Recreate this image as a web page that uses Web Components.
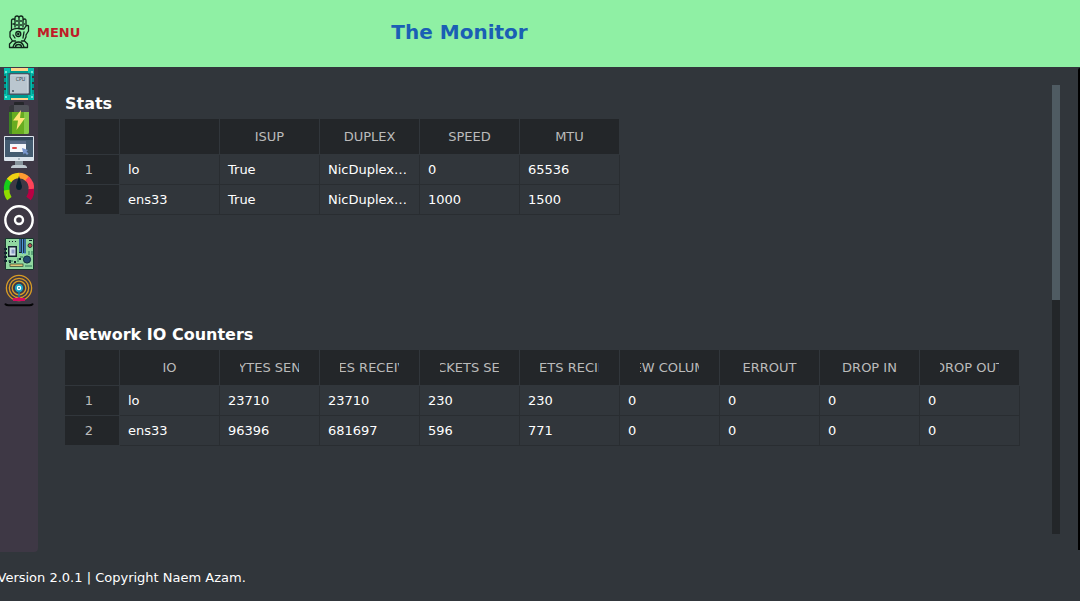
<!DOCTYPE html>
<html lang="en"><head><meta charset="utf-8"><title>The Monitor</title>
<style>body{margin:0;background:#31363b;font:13px "DejaVu Sans",sans-serif;color:#fff}</style></head><body>
<monitor-app></monitor-app>
<script>
const ICONS={
hand:`<svg width="22" height="34" viewBox="0 0 22 34" fill="none" stroke="#10241a" stroke-width="1.3" stroke-linejoin="round" stroke-linecap="round"><path d="M3.5 15V6q0-2 1.8-2t1.7 2V3q0-2 2-2t2 2q0-2 2-2t2 2v3q0-2 1.6-2T18 6v5M7 5v7M11 3v10M15 5v7M3.5 15q3.5-2 7-1.5T16 14l2-3q2-1 2.5 0v5L18 20M5 9h1M8.5 6h1M12.5 6h1M16.500 9v.1M8.500 10h1M12.500 10h1M3.5 15L2 17v5l2.500 4M18 20v2l-2 4M4.500 26l-3 3v3.500h18V29l-3-3M4.500 26h3M13.500 26h3M5 32q1.500-5 5.500-5t5.500 5M5 20l2 3M16 17l-1 6M7.500 32q0-2.500 3-2.500t3 2.500"/><circle cx="10.300" cy="19" r="2.500"/><circle cx="10.300" cy="19" r=".6" fill="#10241a"/></svg>`,
cpu:`<svg width="38" height="34" viewBox="0 0 38 34"><path fill="#00988e" d="M4 1h30v32H4z"/><path fill="#31363b" d="M4 9h2v2H4zM4 15h2v2H4zM4 21h2v2H4zM32 9h2v2h-2zM32 15h2v2h-2zM32 21h2v2h-2z"/><path fill="#05bfae" d="M4 1h6v5H7v22h3v5H4v-6h2V7H4zM28 1h6v6h-2v20h2v6h-6v-5h3V6h-3z"/><path fill="#ffd78a" d="M11 1h17v3H11zM11 31h17v2H11z"/><rect x="8.500" y="6" width="21.500" height="22" rx="1" fill="#445765"/><rect x="10" y="7.500" width="18.500" height="19" fill="#bac6cf"/><path d="M11 8h17v18" fill="none" stroke="#d3dbe3"/><text x="15.800" y="13.800" font-family="DejaVu Sans" font-size="5.500" textLength="9.500" lengthAdjust="spacingAndGlyphs" fill="#34424d">CPU</text><circle cx="13" cy="24" r=".9" fill="#34424d"/><g fill="#a6f6e8"><circle cx="6" cy="5" r=".9"/><circle cx="32" cy="5" r=".9"/><circle cx="6" cy="30" r=".9"/><circle cx="32" cy="30" r=".9"/></g></svg>`,
battery:`<svg width="38" height="34" viewBox="0 0 38 34"><rect x="14" y="1" width="10" height="5" rx="1" fill="#25262a"/><rect x="9" y="4" width="20" height="29" rx="2" fill="#505258"/><path fill="#35363b" d="M9 9V6q0-2 2-2h3v7H9z"/><path fill="#68ac20" d="M9 11h20v20q0 2-2 2H11q-2 0-2-2z"/><path fill="#3c8323" d="M9 11h3v22h-1q-2 0-2-2z"/><path fill="#86ca47" d="M24 11h5v20q0 2-2 2h-3z"/><path fill="#ffe477" d="M21 9l-8 10.500h5L16.500 29 25 17h-5z"/></svg>`,
monitor:`<svg width="38" height="34" viewBox="0 0 38 34"><rect x="4" y="1" width="30" height="25" rx="1" fill="#dce4ec"/><path fill="#445b70" d="M5 2h28v20H5z"/><path fill="#324559" d="M5 2h28v3H5z"/><path fill="#5a6c88" d="M10 6h16v3H10z"/><path fill="#f4f6fa" d="M10 9h16v8H10z"/><rect x="12" y="12" width="5" height="2" rx="1" fill="#dd4c4a"/><path fill="#7895cc" d="M22 13l6 2-1.500 1.500 2 2-1.500 1.500-2-2-1.500 1.500z"/><circle cx="19" cy="24" r=".8" fill="#708291"/><path fill="#87949c" d="M15 26h8v4h-8z"/><path fill="#bfc9d0" d="M11 32q1-2 3-2h10q2 0 3 2v1H11z"/></svg>`,
gauge:`<svg width="38" height="34" viewBox="0 0 38 34" fill="none" stroke-width="5.500"><path stroke="#91dc00" d="M9.400 29.600A12.500 12.500 0 0 1 6.800 20"/><path stroke="#16cc19" d="M6.800 21A12.500 12.500 0 0 1 10 10.500"/><path stroke="#efd213" d="M9 11.500A12.500 12.500 0 0 1 19 6.500"/><path stroke="#ff9b31" d="M19 6.500a12.500 12.500 0 0 1 9 4"/><path stroke="#ff4358" d="M27 9.500a12.500 12.500 0 0 1 4.200 11"/><path stroke="#b90043" d="M31.200 20a12.500 12.500 0 0 1-2.700 9.600"/><path d="M19 7l3 10q0 4-3 4t-3-4z" fill="#061e2d" stroke="none"/></svg>`,
disc:`<svg width="38" height="34" viewBox="0 0 38 34" fill="none" stroke="#fff"><circle cx="19" cy="17" r="13.700" stroke-width="2.400"/><circle cx="19" cy="17" r="4" stroke-width="2.400"/></svg>`,
board:`<svg width="38" height="34" viewBox="0 0 38 34"><path fill="#91d8a0" stroke="#18372d" d="M5.500 1.500h28v31h-28z"/><g fill="#11242d"><path d="M4 11h3v2H4zM4 15h3v2H4zM4 19h3v2H4zM4 23h3v2H4zM19 2h7v14h-7zM8 9h9v11H8z"/><path d="M9 4h1v1H9zM12 4h1v1h-1zM15 4h1v1h-1zM9 23h2v3H9zM19 21h2v2h-2zM14 24h2v2h-2zM29 3h3v1h-3z"/></g><path d="M20 2v13M22.500 2v15M25 2v15" stroke="#5096db" stroke-width="1.300"/><rect x="9.500" y="10.500" width="6" height="8" fill="#d4e2ec"/><rect x="11.500" y="12.500" width="3" height="4" fill="#8c9cc7"/><circle cx="30" cy="8.500" r="2" fill="#c44b4e" stroke="#253c35"/><path d="M29 14v4M32 14v4M8 24h5M18 21v4M20 20h3M25 29h7" stroke="#287354"/><circle cx="27" cy="22.500" r="3.600" fill="#254d73" stroke="#102e3e"/><rect x="10" y="27" width="13" height="2.500" fill="#dfc578" stroke="#29412c" stroke-width=".7"/></svg>`,
signal:`<svg width="38" height="38" viewBox="0 0 38 38" fill="none"><g stroke="#d89b25" stroke-width="1.300"><circle cx="19" cy="17" r="12.600"/><circle cx="19" cy="17" r="9.700"/><circle cx="19" cy="17" r="6.800"/></g><circle cx="19" cy="17" r="3.200" fill="#fff" stroke="#19a6c3" stroke-width="1.900"/><circle cx="19" cy="17" r=".9" fill="#118db4"/><path d="M19 20v8" stroke="#1681a4" stroke-width="1.600"/><path fill="#d70b5e" d="M13 27h4l2-1 2 1h4v3H13z"/><path stroke="#050507" stroke-width="2" stroke-linecap="round" d="M5.500 33.200q1 1 3 1h21q2 0 3-1"/></svg>`};
const define=(name,render)=>customElements.define(name,class extends HTMLElement{connectedCallback(){if(this.shadowRoot)return;const t=document.createElement('template');t.innerHTML=render(this);this.attachShadow({mode:'open'}).append(t.content.cloneNode(true));}});
define('app-icon',e=>`<style>:host{display:block;flex:none}svg{display:block}</style>${ICONS[e.getAttribute('name')]}`);
define('app-header',()=>`<style>:host{display:grid;grid-template-columns:37px 100px 645px;align-items:center;height:67px;background:#8ff0a4}
app-icon{margin:-3px 0 0 8px}.menu{font-weight:bold;color:#c01c28;margin-top:-2px}h1{margin:-3px 0 0;font-size:20px;color:#1a5fb4;text-align:center}</style>
<app-icon name="hand"></app-icon><span class="menu">MENU</span><h1><slot></slot></h1>`);
define('side-bar',()=>`<style>:host{display:flex;flex-direction:column;width:38px;height:485px;background:#3e3845;border-radius:0 0 4px 0}</style>${['cpu','battery','monitor','gauge','disc','board','signal'].map(n=>`<app-icon name="${n}"></app-icon>`).join('')}`);
define('data-table',e=>{const heads=e.getAttribute('heads').split('|'),rows=e.getAttribute('rows').split(';').map(r=>r.split('|'));
return `<style>:host{display:block}h2{margin:0 0 6px;font-size:16px;line-height:19px}
.grid{display:grid;grid-template-columns:55px repeat(${heads.length},100px);grid-template-rows:36px;grid-auto-rows:30px;width:max-content}
.grid>*{box-sizing:border-box;display:flex;align-items:center;min-width:0}
.th,.num{background:#232629;background-clip:padding-box;border:solid #31363b;border-width:0 1px 1px 0;color:#bbb;justify-content:center}
.num{padding-right:6px}.th{padding:0 20px}.th span{display:flex;justify-content:center;overflow:hidden;white-space:nowrap;width:59px}
.td{border:solid #292d31;border-width:0 1px 1px 0;padding:0 8px}.td span{white-space:nowrap;margin-right:-1px}</style>
<h2>${e.getAttribute('label')}</h2><div class="grid"><div class="th"></div>${heads.map(h=>`<div class="th"><span>${h}</span></div>`).join('')}
${rows.map((r,i)=>`<div class="num">${i+1}</div>`+r.map(c=>`<div class="td"><span>${c}</span></div>`).join('')).join('')}</div>`});
define('scroll-track',()=>`<style>:host{display:block;width:8px;height:449px;background:#232629}div{height:215px;background:#4f5b62}</style><div></div>`);
define('app-footer',()=>`<style>:host{display:flex;align-items:center;height:49px;padding-top:1px;margin-left:-2.5px;white-space:nowrap}</style><slot></slot>`);
define('monitor-app',()=>`<style>:host{display:block;height:601px;overflow:hidden}
.body{display:flex;height:485px}.main{display:flex;flex-direction:column;gap:110px;padding:27px 0 0 27px;width:960px}
scroll-track{margin:18px 0 0 27px}.edge{margin:1px 0 2px auto;width:2px;background:#000;border-radius:2px 0 0 0}</style>
<app-header>The Monitor</app-header><div class="body"><side-bar></side-bar><div class="main">
<data-table label="Stats" heads="|ISUP|DUPLEX|SPEED|MTU" rows="lo|True|NicDuplex…|0|65536;ens33|True|NicDuplex…|1000|1500"></data-table>
<data-table label="Network IO Counters" heads="IO|BYTES SENT|BYTES RECEIVED|PACKETS SENT|PACKETS RECIEVED|NEW COLUMN|ERROUT|DROP IN|DROP OUT" rows="lo|23710|23710|230|230|0|0|0|0;ens33|96396|681697|596|771|0|0|0|0"></data-table>
</div><scroll-track></scroll-track><div class="edge"></div></div><app-footer>Version 2.0.1 | Copyright Naem Azam.</app-footer>`);
</script></body></html>
